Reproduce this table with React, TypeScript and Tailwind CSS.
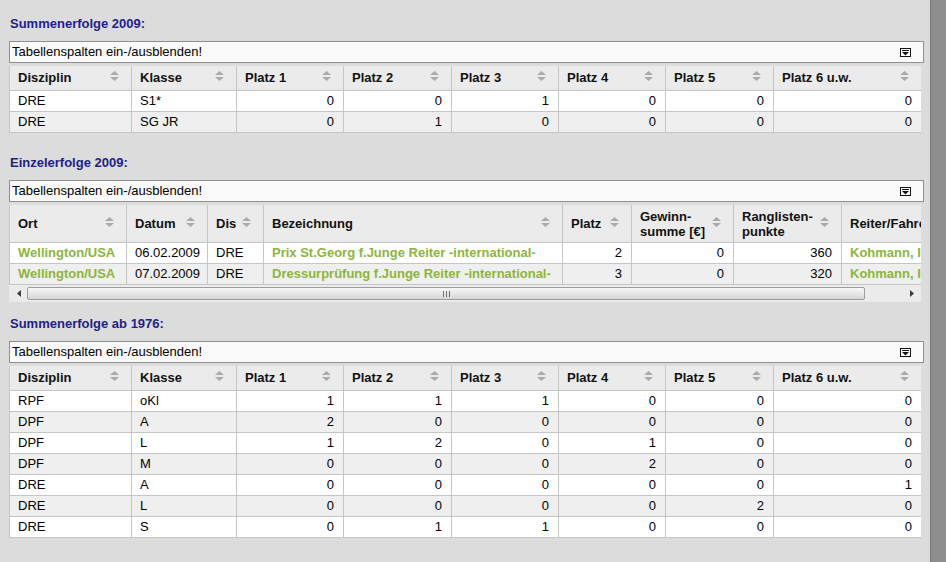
const green = "text-[#8db53c] font-bold";

const sumCols = [
	{ label: "Disziplin", w: "w-[122px]" },
	{ label: "Klasse", w: "w-[105px]" },
	{ label: "Platz 1", w: "w-[107px]" },
	{ label: "Platz 2", w: "w-[108px]" },
	{ label: "Platz 3", w: "w-[107px]" },
	{ label: "Platz 4", w: "w-[107px]" },
	{ label: "Platz 5", w: "w-[108px]" },
	{ label: "Platz 6 u.w.", w: "w-[147px]" },
];

const sum2009 = [
	["DRE", "S1*", 0, 0, 1, 0, 0, 0],
	["DRE", "SG JR", 0, 1, 0, 0, 0, 0],
];

const sum1976 = [
	["RPF", "oKl", 1, 1, 1, 0, 0, 0],
	["DPF", "A", 2, 0, 0, 0, 0, 0],
	["DPF", "L", 1, 2, 0, 1, 0, 0],
	["DPF", "M", 0, 0, 0, 2, 0, 0],
	["DRE", "A", 0, 0, 0, 0, 0, 1],
	["DRE", "L", 0, 0, 0, 0, 2, 0],
	["DRE", "S", 0, 1, 1, 0, 0, 0],
];

const einzel = [
	{ ort: "Wellington/USA", datum: "06.02.2009", dis: "DRE", bez: "Prix St.Georg f.Junge Reiter -international-", platz: 2, summe: 0, punkte: 360, reiter: "Kohmann, Isabel" },
	{ ort: "Wellington/USA", datum: "07.02.2009", dis: "DRE", bez: "Dressurprüfung f.Junge Reiter -international-", platz: 3, summe: 0, punkte: 320, reiter: "Kohmann, Isabel" },
];

function SortIcon() {
	return (
		<svg width="9" height="10" viewBox="0 0 9 10" className="absolute right-[12px] top-1/2 -mt-[7px]">
			<polygon points="0,4 4.5,0 9,4" fill="#aaaaaa" />
			<polygon points="0,6 9,6 4.5,10" fill="#aaaaaa" />
		</svg>
	);
}

function Title({ children, className }: { children: React.ReactNode; className: string }) {
	return <h2 className={"mb-[9px] pl-[10px] text-[13px] font-bold leading-4 text-[#1e2189] " + className}>{children}</h2>;
}

function ColumnToggle() {
	return (
		<div className="flex h-[22px] w-[915px] items-center justify-between border border-[#8f8f8f] bg-[#fafafa] pl-[2px] pr-[12px] text-[13px] leading-4 text-black">
			<span>Tabellenspalten ein-/ausblenden!</span>
			<svg width="11" height="9" viewBox="0 0 11 9">
				<rect x="0.5" y="0.5" width="10" height="8" fill="#fff" stroke="#111" />
				<rect x="2" y="2" width="7" height="1" fill="#111" />
				<polygon points="2,4 9,4 5.5,7.5" fill="#111" />
			</svg>
		</div>
	);
}

function SumTable({ rows }: { rows: (string | number)[][] }) {
	return (
		<div className="mt-[3px] w-[912px] border-l border-[#c6c6c6] text-[13px] leading-4">
			<div className="flex h-[25px] border-b border-[#c6c6c6] bg-[#ebebeb] font-bold text-[#111]">
				{sumCols.map((c) => (
					<div key={c.label} className={"relative flex h-full items-center border-r border-[#c6c6c6] pl-2 last:border-r-0 " + c.w}>
						{c.label}
						<SortIcon />
					</div>
				))}
			</div>
			{rows.map((r, i) => (
				<div key={i} className={"flex h-[21px] border-b border-[#c6c6c6] text-black " + (i % 2 ? "bg-[#efefef]" : "bg-white")}>
					{r.map((v, j) => (
						<div key={j} className={"flex h-full items-center border-r border-[#c6c6c6] last:border-r-0 " + sumCols[j].w + (j < 2 ? " pl-2" : " justify-end pr-[9px]")}>
							{v}
						</div>
					))}
				</div>
			))}
		</div>
	);
}

function HeadCell({ w, children, two }: { w: string; children: React.ReactNode; two?: boolean }) {
	return (
		<div className={"relative flex h-full items-center border-r border-[#c6c6c6] pl-2 " + w + (two ? " leading-[15px]" : "")}>
			<span>{children}</span>
			<SortIcon />
		</div>
	);
}

function Cell({ w, children, right, className = "" }: { w: string; children: React.ReactNode; right?: boolean; className?: string }) {
	return (
		<div className={"flex h-full items-center overflow-hidden whitespace-nowrap border-r border-[#c6c6c6] " + w + (right ? " justify-end pr-[9px] " : " pl-2 ") + className}>
			{children}
		</div>
	);
}

function HScrollbar() {
	return (
		<div className="flex h-[17px] w-[912px] items-center bg-[#ebebeb]">
			<div className="flex h-full w-[17px] items-center justify-center pl-[2px]">
				<svg width="4" height="7" viewBox="0 0 4 7">
					<polygon points="4,0 4,7 0,3.5" fill="#3c3c3c" />
				</svg>
			</div>
			<div className="ml-px flex h-[13px] w-[838px] items-center justify-center rounded-[2px] border border-[#9c9c9c] bg-linear-to-b from-[#f8f8f8] to-[#d6d6d6]">
				<div className="flex gap-[2px]">
					<span className="h-[6px] w-px bg-[#707070]" />
					<span className="h-[6px] w-px bg-[#707070]" />
					<span className="h-[6px] w-px bg-[#707070]" />
				</div>
			</div>
			<div className="flex-1" />
			<div className="flex h-full w-[17px] items-center justify-center pr-[2px]">
				<svg width="4" height="7" viewBox="0 0 4 7">
					<polygon points="0,0 0,7 4,3.5" fill="#3c3c3c" />
				</svg>
			</div>
		</div>
	);
}

function EinzelTable() {
	return (
		<div className="mt-[3px]">
			<div className="w-[912px] overflow-hidden border-l border-[#c6c6c6] text-[13px] leading-4">
				<div className="w-[1032px]">
					<div className="flex h-[38px] border-b border-[#c6c6c6] bg-[#ebebeb] font-bold text-[#111]">
						<HeadCell w="w-[117px]">Ort</HeadCell>
						<HeadCell w="w-[81px]">Datum</HeadCell>
						<HeadCell w="w-[56px]">Dis</HeadCell>
						<HeadCell w="w-[299px]">Bezeichnung</HeadCell>
						<HeadCell w="w-[69px]">Platz</HeadCell>
						<HeadCell w="w-[102px]" two>
							Gewinn-
							<br />
							summe [€]
						</HeadCell>
						<HeadCell w="w-[108px]" two>
							Ranglisten-
							<br />
							punkte
						</HeadCell>
						<HeadCell w="w-[200px]">Reiter/Fahrer</HeadCell>
					</div>
					{einzel.map((r, i) => (
						<div key={i} className={"flex h-[21px] border-b border-[#c6c6c6] text-black " + (i % 2 ? "bg-[#efefef]" : "bg-white")}>
							<Cell w="w-[117px]" className={green}>{r.ort}</Cell>
							<Cell w="w-[81px]">{r.datum}</Cell>
							<Cell w="w-[56px]">{r.dis}</Cell>
							<Cell w="w-[299px]" className={green}>{r.bez}</Cell>
							<Cell w="w-[69px]" right>{r.platz}</Cell>
							<Cell w="w-[102px]" right>{r.summe}</Cell>
							<Cell w="w-[108px]" right>{r.punkte}</Cell>
							<Cell w="w-[200px]" className={green}>{r.reiter}</Cell>
						</div>
					))}
				</div>
			</div>
			<HScrollbar />
		</div>
	);
}

export default function App() {
	return (
		<div className="flex h-[562px] overflow-hidden bg-[#dcdcdc] font-['Liberation_Sans',Arial,sans-serif]">
			<div className="w-[930px] pl-[9px]">
				<Title className="mt-4 -ml-[9px]">Summenerfolge 2009:</Title>
				<ColumnToggle />
				<SumTable rows={sum2009} />

				<Title className="mt-[22px] -ml-[9px]">Einzelerfolge 2009:</Title>
				<ColumnToggle />
				<EinzelTable />

				<Title className="mt-[14px] -ml-[9px]">Summenerfolge ab 1976:</Title>
				<ColumnToggle />
				<SumTable rows={sum1976} />
			</div>
			<div className="w-4 border-l border-[#777] bg-[#8e8e8e]" />
		</div>
	);
}
